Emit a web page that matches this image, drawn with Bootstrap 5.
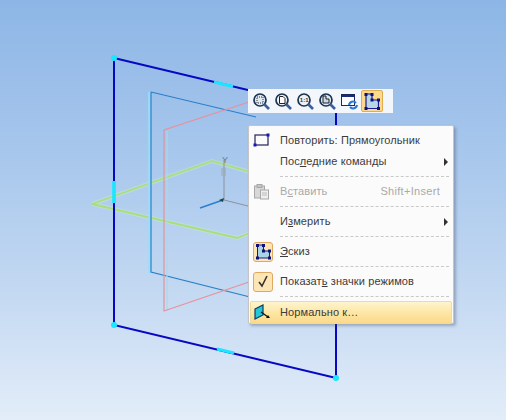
<!DOCTYPE html>
<html lang="ru">
<head>
<meta charset="utf-8">
<title>Эскиз</title>
<link href="https://cdn.jsdelivr.net/npm/bootstrap@5.3.0/dist/css/bootstrap.min.css" rel="stylesheet">
<style>
html,body{margin:0;height:100%;overflow:hidden}
.viewport-area{width:506px;height:420px;background:linear-gradient(180deg,#8db6e6 0%,#a6c6ec 35%,#c4d9f2 70%,#e3edf9 100%);font-family:"Liberation Sans",Arial,sans-serif;font-size:11px;position:relative;overflow:hidden}
.scene{position:absolute;left:0;top:0;width:506px;height:420px}
.mini-tools{position:absolute;left:248px;top:89px;width:145px;height:24px;background:#f3f6fb;padding:0 0 0 2px;gap:0}
.mini-tool{width:22px;height:22px;flex:none;display:flex;align-items:center;justify-content:center;padding:0;border:1px solid transparent;border-radius:2px;background:transparent}
.mini-tool.is-on{background:#fdd98b;border-color:#e0ac50;margin-left:1px}
.ctx-menu.dropdown-menu{left:248px;top:125px;width:206px;height:199px;padding:3px 1px 0;margin:0;border:1px solid #c5c5c5;border-radius:2px;background:#fbfbfb;box-shadow:2px 2px 3px rgba(60,70,90,.35);min-width:0;font-size:11px;color:#3b3b3b}
.ctx-menu .dropdown-item{display:flex;align-items:center;padding:0 4px 0 0;height:29px;color:#3b3b3b;background:transparent;letter-spacing:.1px;border-radius:2px}
.ctx-menu .dropdown-item.short-row{height:22px}
.ctx-menu .dropdown-item.short-row.second{height:21px}
.ctx-menu .dropdown-item.disabled{color:#a9a9a9}
.ctx-menu .dropdown-item.is-hot{height:23px;margin-top:4px;background:linear-gradient(180deg,#fdf4cf 0%,#fde8a8 45%,#fbd98a 100%);border:1px solid #ecdca0}
.ctx-menu .is-hot .ico-cell{width:29px;padding-left:2px}
.ctx-menu .dropdown-divider{margin:0 3px 0 30px;border-top:1px dashed #c9c9c9;opacity:1;height:0}
.ctx-menu .divider-low{margin-top:4px}
.ico-cell{width:30px;flex:none;display:flex;justify-content:flex-start;align-items:center;padding-left:3px}
.ico-frame{width:20px;height:20px;display:flex;align-items:center;justify-content:center;background:#fde6b4;border:1px solid #e0a860;border-radius:3px}
.hint{margin-left:auto;padding-right:8px;letter-spacing:.3px}
.arrow-r{margin-left:auto;width:0;height:0;border-left:4px solid #333;border-top:4px solid transparent;border-bottom:4px solid transparent}
.ctx-menu u{text-underline-offset:1px}
.axis-text{font-family:"Liberation Sans",Arial,sans-serif;font-size:9px;fill:#777}
.mag-text{font-family:"Liberation Sans",Arial,sans-serif;font-size:6px;font-weight:700;fill:#334}
</style>
</head>
<body>
<div class="viewport-area">
  <svg class="scene" viewBox="0 0 506 420" fill="none" aria-label="Плоскости">
    <path d="M92 204L212 161L250 172M92 204L237 238L250 233" stroke="#d6f0c0" stroke-width="4" opacity=".35"/>
    <path d="M92 204L212 161L250 172M92 204L237 238L250 233" stroke="#a6e07c" stroke-width="1.800"/>
    <path d="M149.500 92V273" stroke="#9edcf8" stroke-width="3" opacity=".8"/>
    <path d="M151 92L256 117M151 92V272L250 297" stroke="#2a80c8" stroke-width="1.200"/>
    <path d="M167 131V311" stroke="#a9d8e8" stroke-width="2" opacity=".6"/>
    <path d="M249 102L164 130V311L249 282" stroke="#e8909c" stroke-width="1.200"/>
    <path d="M224 200V160M224 200L248 206" stroke="#8a929c" stroke-width="1"/>
    <path d="M200 208L223 200" stroke="#2a7ed0" stroke-width="1.400"/>
    <path d="M219 200l5-2-1 4z" fill="#145"/>
    <text class="axis-text" x="222" y="163">Y</text>
    <path d="M222 176v-8M225 176v-8" stroke="#9aa" stroke-width="1"/>
    <path d="M114 58L336 111V378L114 325Z" stroke="#0808c4" stroke-width="2"/>
    <path d="M214 82L233 86.500M217 349L234 353" stroke="#19e6ff" stroke-width="3"/>
    <path d="M114 181V203" stroke="#19e6ff" stroke-width="3.600"/>
    <circle cx="114" cy="58" r="3" fill="#19e6ff"/>
    <circle cx="114" cy="325" r="3" fill="#19e6ff"/>
    <circle cx="336" cy="378" r="3" fill="#19e6ff"/>
  </svg>

  <div class="mini-tools d-flex align-items-center" role="toolbar">
    <button class="mini-tool" type="button" aria-label="Увеличить рамкой"><svg width="19" height="19" viewBox="0 0 19 19" fill="none"><circle cx="8" cy="8" r="6" fill="#dfe9f4" stroke="#1c3350" stroke-width="1.700"/><path d="M5 5h6v6H5z" stroke="#333" stroke-dasharray="1 1"/><path d="M12 12l5 5" stroke="#3a5f9e" stroke-width="2.600"/></svg></button>
    <button class="mini-tool" type="button" aria-label="Масштаб"><svg width="19" height="19" viewBox="0 0 19 19" fill="none"><circle cx="8" cy="8" r="6" fill="#eef2f8" stroke="#1c3350" stroke-width="1.700"/><path d="M5.500 4.500h3.500l2 2v5h-5.500z" stroke="#222" fill="#fff"/><path d="M12 12l5 5" stroke="#3a5f9e" stroke-width="2.600"/></svg></button>
    <button class="mini-tool" type="button" aria-label="Масштаб 1:1"><svg width="19" height="19" viewBox="0 0 19 19" fill="none"><circle cx="8" cy="8" r="6" fill="#eef2f8" stroke="#1c3350" stroke-width="1.700"/><text class="mag-text" x="3.800" y="10">1:1</text><path d="M12 12l5 5" stroke="#3a5f9e" stroke-width="2.600"/></svg></button>
    <button class="mini-tool" type="button" aria-label="Показать всё"><svg width="19" height="19" viewBox="0 0 19 19" fill="none"><circle cx="8" cy="8" r="6" fill="#dfe9f4" stroke="#1c3350" stroke-width="1.700"/><path d="M5 4h3v3h3v4H5z" stroke="#222" fill="#c8d8ee"/><path d="M12 12l5 5" stroke="#3a5f9e" stroke-width="2.600"/></svg></button>
    <button class="mini-tool" type="button" aria-label="Обновить"><svg width="19" height="19" viewBox="0 0 19 19" fill="none"><rect x="1.500" y="2.500" width="13" height="11" fill="#fff" stroke="#1b2a5c"/><path d="M1.500 3h13v2h-13z" fill="#1b2a7c"/><path d="M9 13a4 4 0 0 1 7-2M17 13a4 4 0 0 1-7 2" stroke="#2a78d8" stroke-width="2"/></svg></button>
    <button class="mini-tool is-on" type="button" aria-label="Эскиз"><svg width="19" height="19" viewBox="0 0 19 19" fill="none"><path d="M3 2h6v6h6.500v8.500H3z" fill="#b9d6e4" stroke="#1a1a8c" stroke-width="1.200"/><g fill="#10107c"><rect x="1.500" y="1" width="3" height="3"/><rect x="7.500" y="1" width="3" height="3"/><rect x="7.500" y="6.500" width="3" height="3"/><rect x="14" y="6.500" width="3" height="3"/><rect x="14" y="15" width="3" height="3"/><rect x="1.500" y="15" width="3" height="3"/></g></svg></button>
  </div>

  <div class="ctx-menu dropdown-menu show">
    <a class="dropdown-item short-row" href="#"><span class="ico-cell"><svg width="17" height="14" viewBox="0 0 17 14" fill="none"><rect x="2" y="2" width="13" height="10" stroke="#22225c" stroke-width="1.200"/><rect x="0.500" y="10.500" width="3" height="3" fill="#1818b8"/><rect x="13.500" y="0.500" width="3" height="3" fill="#1818b8"/></svg></span>Повторить: Прямоугольник</a>
    <a class="dropdown-item short-row second" href="#"><span class="ico-cell"></span><span>Пос<u>л</u>едние команды</span><i class="arrow-r"></i></a>
    <hr class="dropdown-divider divider-low">
    <a class="dropdown-item disabled" href="#"><span class="ico-cell"><svg width="17" height="17" viewBox="0 0 17 17" fill="none"><rect x="1.500" y="3" width="10" height="12" fill="#d8d8d8" stroke="#a8a8a8"/><rect x="4" y="1.500" width="5" height="3" fill="#c4c4c4" stroke="#a8a8a8"/><rect x="7.500" y="7" width="8" height="9" fill="#eee" stroke="#a8a8a8"/><path d="M9 10h5M9 12h5" stroke="#bbb"/></svg></span><span>В<u>с</u>тавить</span><span class="hint">Shift+Insert</span></a>
    <hr class="dropdown-divider">
    <a class="dropdown-item" href="#"><span class="ico-cell"></span><span>И<u>з</u>мерить</span><i class="arrow-r"></i></a>
    <hr class="dropdown-divider">
    <a class="dropdown-item" href="#"><span class="ico-cell"><span class="ico-frame"><svg width="17" height="17" viewBox="0 0 17 17" fill="none"><path d="M2.500 2h6v6h6v7h-12z" fill="#a9d4e4" stroke="#1a1a8c"/><g fill="#10107c"><rect x="1" y="1" width="3" height="3"/><rect x="7" y="1" width="3" height="3"/><rect x="7" y="6.500" width="3" height="3"/><rect x="13" y="6.500" width="3" height="3"/><rect x="13" y="13.500" width="3" height="3"/><rect x="1" y="13.500" width="3" height="3"/></g></svg></span></span><span><u>Э</u>скиз</span></a>
    <hr class="dropdown-divider">
    <a class="dropdown-item" href="#"><span class="ico-cell"><span class="ico-frame"><svg width="12" height="13" viewBox="0 0 12 13" fill="none"><path d="M2 7l3 4 5-10" stroke="#333" stroke-width="1.600"/></svg></span></span><span>Показат<u>ь</u> значки режимов</span></a>
    <hr class="dropdown-divider">
    <a class="dropdown-item is-hot" href="#"><span class="ico-cell"><svg width="18" height="17" viewBox="0 0 18 17" fill="none"><path d="M2 5L10 1V11L2 15Z" fill="#22c8d8" stroke="#0a3c64" stroke-width="1.200"/><path d="M8 8l7 5" stroke="#111" stroke-width="1.200"/><path d="M17 14l-4 0 2-3z" fill="#111"/></svg></span>Нормально к…</a>
  </div>
</div>
<script src="https://cdn.jsdelivr.net/npm/bootstrap@5.3.0/dist/js/bootstrap.bundle.min.js"></script>
</body>
</html>
